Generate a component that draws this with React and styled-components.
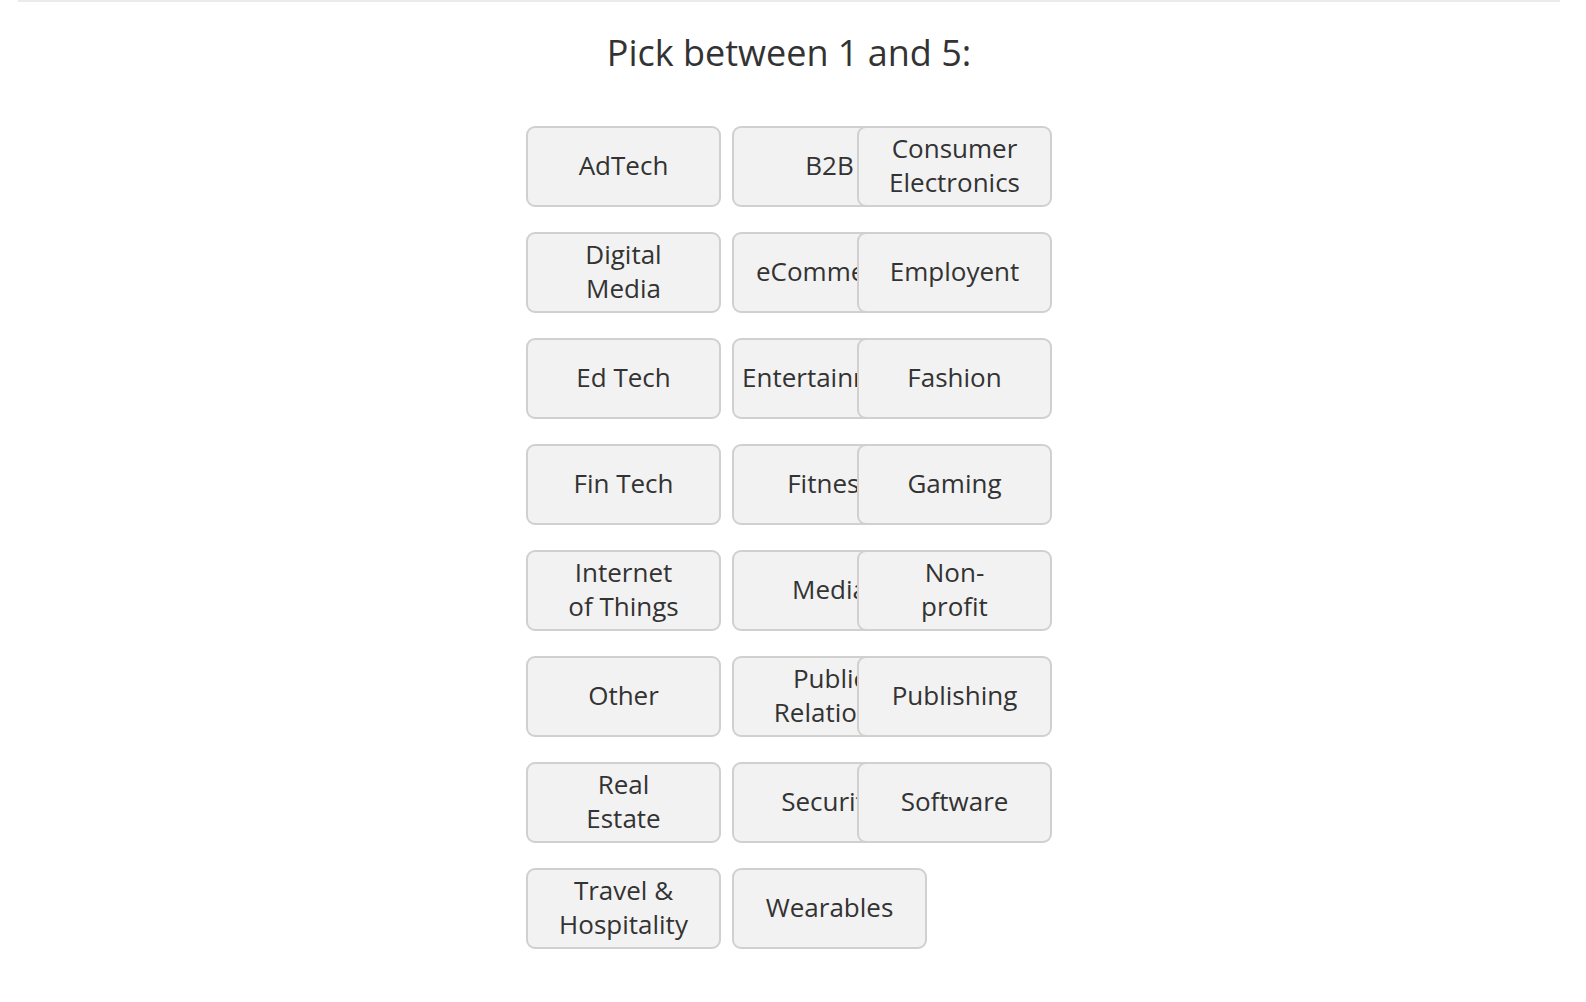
import React from 'react'
import styled, { createGlobalStyle } from 'styled-components'

const GlobalStyle = createGlobalStyle`
  html, body {
    margin: 0;
    padding: 0;
    background: #fff;
  }
  body {
    font-family: 'Open Sans', 'Noto Sans', sans-serif;
    color: #333;
  }
`

const industries = [
  'AdTech',
  'B2B',
  'Consumer Electronics',
  'Digital Media',
  'eCommerce',
  'Employent',
  'Ed Tech',
  'Entertainment',
  'Fashion',
  'Fin Tech',
  'Fitness',
  'Gaming',
  'Internet of Things',
  'Media',
  'Non-profit',
  'Other',
  'Public Relations',
  'Publishing',
  'Real Estate',
  'Security',
  'Software',
  'Travel & Hospitality',
  'Wearables',
]

const App = () => {
  return (
    <>
      <GlobalStyle />
      <Page>
        <TopRule />
        <Title>Pick between 1 and 5:</Title>
        <Choices>
          {industries.map((name) => (
            <Choice key={name} type='button'>
              <span>{name}</span>
            </Choice>
          ))}
        </Choices>
      </Page>
    </>
  )
}

const Page = styled.div`
  padding: 0 26px 40px 18px;
`

const TopRule = styled.div`
  height: 2px;
  background: #ebebeb;
`

const Title = styled.h1`
  margin: 26px 0 0;
  font-size: 36px;
  line-height: 50px;
  font-weight: 400;
  text-align: center;
  color: #333;
`

/* the middle track is narrower than the buttons, so the third column sits over the second */
const Choices = styled.div`
  display: grid;
  grid-template-columns: 195px 114px 195px;
  grid-auto-rows: 81px;
  column-gap: 11px;
  row-gap: 25px;
  justify-content: center;
  margin-top: 48px;
`

const Choice = styled.button`
  box-sizing: border-box;
  width: 195px;
  height: 81px;
  display: flex;
  align-items: center;
  justify-content: center;
  padding: 0 34px 4px;
  margin: 0;
  background: #f2f2f2;
  border: 2px solid #d0d0d0;
  border-radius: 9px;
  font-family: 'Open Sans', 'Noto Sans', sans-serif;
  font-size: 26px;
  line-height: 34px;
  color: #333;
  text-align: center;
  cursor: pointer;

  span {
    display: block;
  }
`

export default App
